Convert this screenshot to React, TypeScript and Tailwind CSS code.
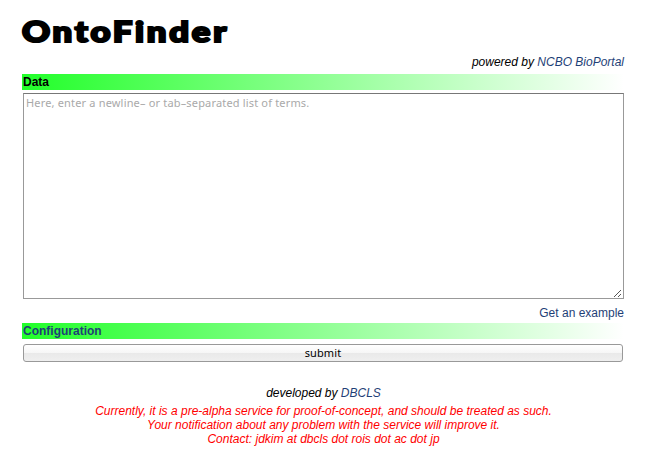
import React from "react";

function SectionBar({ children }: { children: React.ReactNode }) {
  return (
    <div className="h-4 bg-[linear-gradient(to_right,#22ff2a,#fff)] pl-px text-[12px] leading-[16px] font-bold">
      {children}
    </div>
  );
}

function Link({ children }: { children: React.ReactNode }) {
  return <a href="#" className="text-[#1f3f77]">{children}</a>;
}

function ResizeGrip() {
  return (
    <svg className="pointer-events-none absolute right-[2px] bottom-[2px]" width="8" height="8" viewBox="0 0 8 8" shapeRendering="crispEdges">
      <path d="M0 7h1v1h-1zM1 6h1v1h-1zM2 5h1v1h-1zM3 4h1v1h-1zM4 3h1v1h-1zM5 2h1v1h-1zM6 1h1v1h-1zM4 7h1v1h-1zM5 6h1v1h-1zM6 5h1v1h-1z" fill="#555" />
    </svg>
  );
}

export default function App() {
  return (
    <main className="h-[464px] w-[649px] overflow-hidden bg-white pt-[14px] pr-[25px] pl-[22px] font-['Liberation_Sans',Arial,sans-serif] text-[12px] leading-[14px] text-black">
      <h1 className="h-[41px] origin-left scale-x-[1.26] font-['Lato',sans-serif] text-[27.5px] leading-[35px] font-black tracking-[2.2px] whitespace-nowrap [-webkit-text-stroke:2.1px_black]">
        OntoFinder
      </h1>
      <p className="h-[19px] text-right italic">
        powered by <Link>NCBO BioPortal</Link>
      </p>
      <SectionBar>Data</SectionBar>
      <div className="relative mt-[3px] ml-px h-[206px]">
        <textarea
          className="block h-full w-full resize-none border border-[#999] border-t-[#777] bg-white px-[2px] py-[2px] font-['Noto_Sans',sans-serif] text-[11px] leading-[14px] tracking-[0.17px] outline-none placeholder:text-[#a9a9a9]"
          placeholder="Here, enter a newline– or tab–separated list of terms."
        />
        <ResizeGrip />
      </div>
      <p className="mt-[7px] h-[17px] text-right">
        <Link>Get an example</Link>
      </p>
      <SectionBar>
        <Link>Configuration</Link>
      </SectionBar>
      <button className="mt-[5px] mr-px ml-px block h-[18px] w-[600px] rounded-[3px] border border-[#999] bg-[linear-gradient(#fff_0%,#f6f6f6_49%,#e9e9e9_50%,#efefef_100%)] font-['Noto_Sans',sans-serif] text-[11px] leading-[16px] tracking-[0.1px]">
        submit
      </button>
      <footer className="mt-[24px] pl-px text-center italic">
        <p>
          developed by <Link>DBCLS</Link>
        </p>
        <p className="mt-1 text-[#ff0000]">
          Currently, it is a pre-alpha service for proof-of-concept, and should be treated as such.
          <br />
          Your notification about any problem with the service will improve it.
          <br />
          Contact: jdkim at dbcls dot rois dot ac dot jp
        </p>
      </footer>
    </main>
  );
}
